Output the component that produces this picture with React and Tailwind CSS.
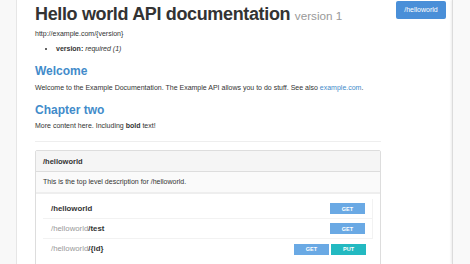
export default function App() {
  const resources = [
    { base: '/helloworld', rest: '', methods: ['GET'], root: true },
    { base: '/helloworld', rest: '/test', methods: ['GET'] },
    { base: '/helloworld', rest: '/{id}', methods: ['GET', 'PUT'] },
  ]

  const methodColor = {
    GET: 'bg-[#6aa9e4]',
    PUT: 'bg-[#23b9c1]',
  }

  return (
    <div className="flex h-[264px] w-[470px] overflow-hidden bg-white text-[#333] font-['Liberation_Sans',Arial,sans-serif]">
      <div className="w-[17px] shrink-0 border-r border-[#e6e6e6] bg-[#f8f8f8]" />

      <div className="flex flex-1 gap-[15px] pl-[18px]">
        <div className="w-[346px] shrink-0">
          <h1 className="mt-[5px] text-[18px] font-bold leading-[1.1] tracking-[-0.35px]">
            Hello world API documentation{' '}
            <span className="text-[11.7px] font-normal tracking-normal text-[#999]">version 1</span>
          </h1>

          <p className="mt-[4px] text-[7px] leading-[10px]">http://example.com/{'{version}'}</p>

          <ul className="mt-[5px] list-disc pl-[21px] text-[7px] leading-[10px]">
            <li>
              <strong>version:</strong> <em>required (1)</em>
            </li>
          </ul>

          <h2 className="mt-[11px] text-[12px] font-bold leading-[1.1] text-[#428bca]">Welcome</h2>
          <p className="mt-[5px] text-[7px] leading-[10px]">
            Welcome to the Example Documentation. The Example API allows you to do stuff. See also{' '}
            <a className="text-[#428bca]">example.com</a>.
          </p>

          <h2 className="mt-[11px] text-[12px] font-bold leading-[1.1] text-[#428bca]">Chapter two</h2>
          <p className="mt-[4px] text-[7px] leading-[10px]">
            More content here. Including <strong>bold</strong> text!
          </p>

          <hr className="mt-[10px] border-t border-[#eee]" />

          <div className="mt-[8px] rounded-[2px] border border-[#ddd]">
            <div className="flex h-[21px] items-center border-b border-[#ddd] bg-[#f5f5f5] px-[7px] text-[7.5px] font-bold">
              /helloworld
            </div>
            <div className="flex h-[22px] items-center border-b-2 border-[#eee] bg-[#fafafa] px-[7px] text-[7px]">
              This is the top level description for /helloworld.
            </div>
            <div className="px-[7px] pt-[5px] pb-[8px]">
              {resources.map((r, i) => (
                <div
                  key={i}
                  className={`flex h-[20px] items-center justify-between pl-[8px] pr-[7px] ${
                    i < 2 ? 'border-b border-r border-[#f2f2f2]' : ''
                  }`}
                >
                  <span className="text-[7.8px] font-bold">
                    {r.root ? (
                      r.base
                    ) : (
                      <>
                        <span className="font-normal text-[#999]">{r.base}</span>
                        {r.rest}
                      </>
                    )}
                  </span>
                  <div className="flex gap-[2px]">
                    {r.methods.map((m) => (
                      <span
                        key={m}
                        className={`flex h-[11px] w-[35px] items-center justify-center text-[5.5px] font-bold text-white ${methodColor[m]}`}
                      >
                        {m}
                      </span>
                    ))}
                  </div>
                </div>
              ))}
            </div>
          </div>
        </div>

        <div className="pt-[1px]">
          <button className="flex h-[18px] w-[50px] items-center justify-center rounded-[2px] bg-[#4a8fd8] text-[7px] text-white">
            /helloworld
          </button>
        </div>
      </div>

      <div className="w-[18px] shrink-0 border-l border-[#dcdcdc] bg-[#f9f9f9] shadow-[-1px_0_2px_rgba(0,0,0,0.08)]" />
    </div>
  )
}
